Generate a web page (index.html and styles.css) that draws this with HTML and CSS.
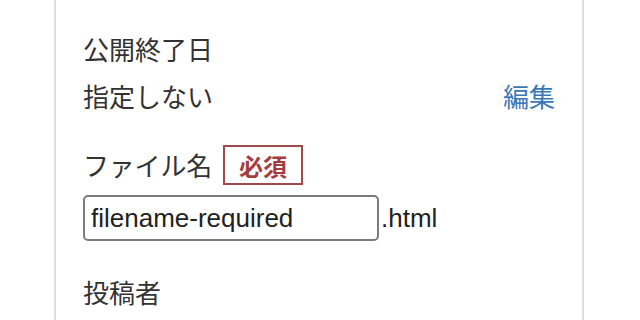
FILE: index.html
```html
<!DOCTYPE html>
<html lang="ja">
<head>
<meta charset="utf-8">
<link rel="stylesheet" href="styles.css">
</head>
<body>
<div class="panel">
  <div class="field">
    <div class="label">公開終了日</div>
    <div class="value-row">
      <span class="value">指定しない</span>
      <a class="edit" href="#">編集</a>
    </div>
  </div>
  <div class="field field-file">
    <div class="label-row">
      <span class="label">ファイル名</span>
      <span class="badge">必須</span>
    </div>
    <div class="input-row">
      <input class="text-input" type="text" value="filename-required">
      <span class="ext">.html</span>
    </div>
  </div>
  <div class="field field-author">
    <div class="label">投稿者</div>
  </div>
</div>
</body>
</html>
```
FILE: styles.css
```css
html, body {
  margin: 0;
  padding: 0;
  background: #fff;
}
body {
  font-family: "Noto Sans CJK JP", "Liberation Sans", sans-serif;
  font-size: 26px;
  color: #333;
}
.panel {
  box-sizing: border-box;
  margin-left: 54px;
  width: 530px;
  height: 320px;
  overflow: hidden;
  border-left: 2px solid #dcdcdc;
  border-right: 2px solid #dcdcdc;
  padding: 31px 27px 0;
}
.label, .value {
  line-height: 36px;
}
.value-row {
  display: flex;
  justify-content: space-between;
  align-items: center;
  margin-top: 11px;
  line-height: 36px;
}
.edit {
  color: #3a77b8;
  text-decoration: none;
}
.field-file {
  margin-top: 31px;
}
.label-row {
  display: flex;
  align-items: center;
  height: 40px;
  gap: 11px;
}
.label-row .label {
  letter-spacing: -0.2px;
}
.badge {
  box-sizing: border-box;
  height: 40px;
  display: flex;
  align-items: center;
  padding: 0 14px;
  border: 2px solid #a2494b;
  color: #a53d3f;
  font-weight: bold;
  font-size: 24px;
}
.input-row {
  display: flex;
  align-items: center;
  margin-top: 10px;
}
.text-input {
  box-sizing: border-box;
  width: 296px;
  height: 46px;
  margin: 0;
  padding: 0 6px;
  border: 2px solid #7b7b7b;
  border-radius: 5px;
  font-family: "Liberation Sans", Arial, sans-serif;
  font-size: 26px;
  color: #222;
  background: #fff;
  outline: none;
}
.ext {
  margin-left: 2px;
  font-family: "Liberation Sans", Arial, sans-serif;
  font-size: 26px;
  color: #222;
}
.field-author {
  margin-top: 33px;
}
```
